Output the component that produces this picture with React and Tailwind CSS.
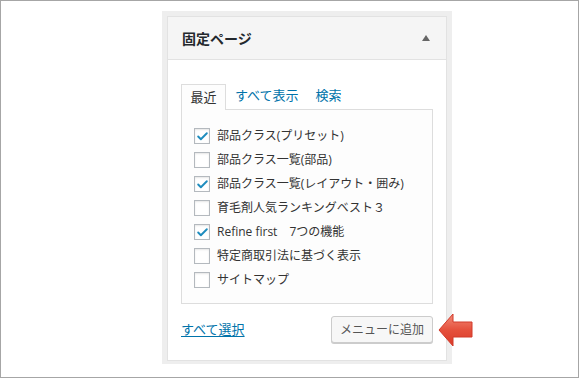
import { Check } from "lucide-react";

const PAGES = [
  { label: "部品クラス(プリセット)", checked: true },
  { label: "部品クラス一覧(部品)", checked: false },
  { label: "部品クラス一覧(レイアウト・囲み)", checked: true },
  { label: "育毛剤人気ランキングベスト３", checked: false },
  { label: "Refine first　7つの機能", checked: true },
  { label: "特定商取引法に基づく表示", checked: false },
  { label: "サイトマップ", checked: false },
];

const font = "font-['Open_Sans','Noto_Sans_CJK_JP',sans-serif]";

export default function App() {
  return (
    <div className={`relative h-[379px] w-[580px] bg-white ${font}`}>
      <div className="h-[378px] w-[579px] border border-[#a6a6a6] pl-[161px] pt-[10px]">
        {/* Metabox */}
        <div className="w-[290px] bg-[#eeeeee] px-[5px] pb-[3px] pt-[5px]">
          <div className="border border-[#e2e2e2] bg-white">
            {/* Header */}
            <div className="flex h-[43px] items-center justify-between border-b border-[#e2e2e2] bg-[#f5f5f5] pl-[14px] pr-[16px]">
              <span className="text-[14px] font-bold text-[#23282d]">固定ページ</span>
              <svg width="8" height="6" viewBox="0 0 8 6">
                <path d="M4 0 L8 6 L0 6 Z" fill="#666" />
              </svg>
            </div>

            {/* Body */}
            <div className="px-[13px] pb-[17px] pt-[24px]">
              {/* Tabs */}
              <div className="flex items-end text-[13px] leading-none">
                <div className="relative z-10 -mb-px flex h-[26px] w-[45px] items-center justify-center border border-b-0 border-[#dddddd] bg-[#fdfdfd] text-[#333]">
                  最近
                </div>
                <span className="ml-[9px] pb-[7px] text-[#0073aa]">すべて表示</span>
                <span className="ml-[17px] pb-[7px] text-[#0073aa]">検索</span>
              </div>

              {/* Panel */}
              <div className="flex h-[195px] flex-col gap-[8px] border border-[#dddddd] bg-[#fdfdfd] pl-[12px] pt-[18px]">
                {PAGES.map((p) => (
                  <div key={p.label} className="flex h-[16px] items-center gap-[7px]">
                    <div className="flex h-[16px] w-[16px] items-center justify-center border border-[#b4b9be] bg-white shadow-[inset_0_1px_2px_rgba(0,0,0,0.1)]">
                      {p.checked && <Check size={13} strokeWidth={3.5} className="text-[#1e8cbe]" />}
                    </div>
                    <span className="whitespace-nowrap text-[12px] text-[#333]">{p.label}</span>
                  </div>
                ))}
              </div>

              {/* Footer */}
              <div className="mt-[12px] flex items-center justify-between">
                <span className="text-[13px] text-[#0073aa] underline underline-offset-2">すべて選択</span>
                <button className="h-[27px] w-[102px] rounded-[3px] border border-[#cccccc] bg-[#f7f7f7] text-[12px] text-[#555] shadow-[0_1px_0_#cccccc]">
                  メニューに追加
                </button>
              </div>
            </div>
          </div>
        </div>
      </div>

      {/* Annotation arrow */}
      <svg className="absolute left-[438px] top-[312px]" width="36" height="36" viewBox="0 0 36 36">
        <defs>
          <linearGradient id="ar" x1="0" y1="0" x2="0" y2="1">
            <stop offset="0" stopColor="#f28b78" />
            <stop offset="0.5" stopColor="#e5503c" />
            <stop offset="1" stopColor="#d93a28" />
          </linearGradient>
        </defs>
        <path d="M1 18 L15 2 L15 10 L34 10 L34 25 L15 25 L15 34 Z" fill="url(#ar)" stroke="#d23a2a" strokeWidth="1" />
      </svg>
    </div>
  );
}
